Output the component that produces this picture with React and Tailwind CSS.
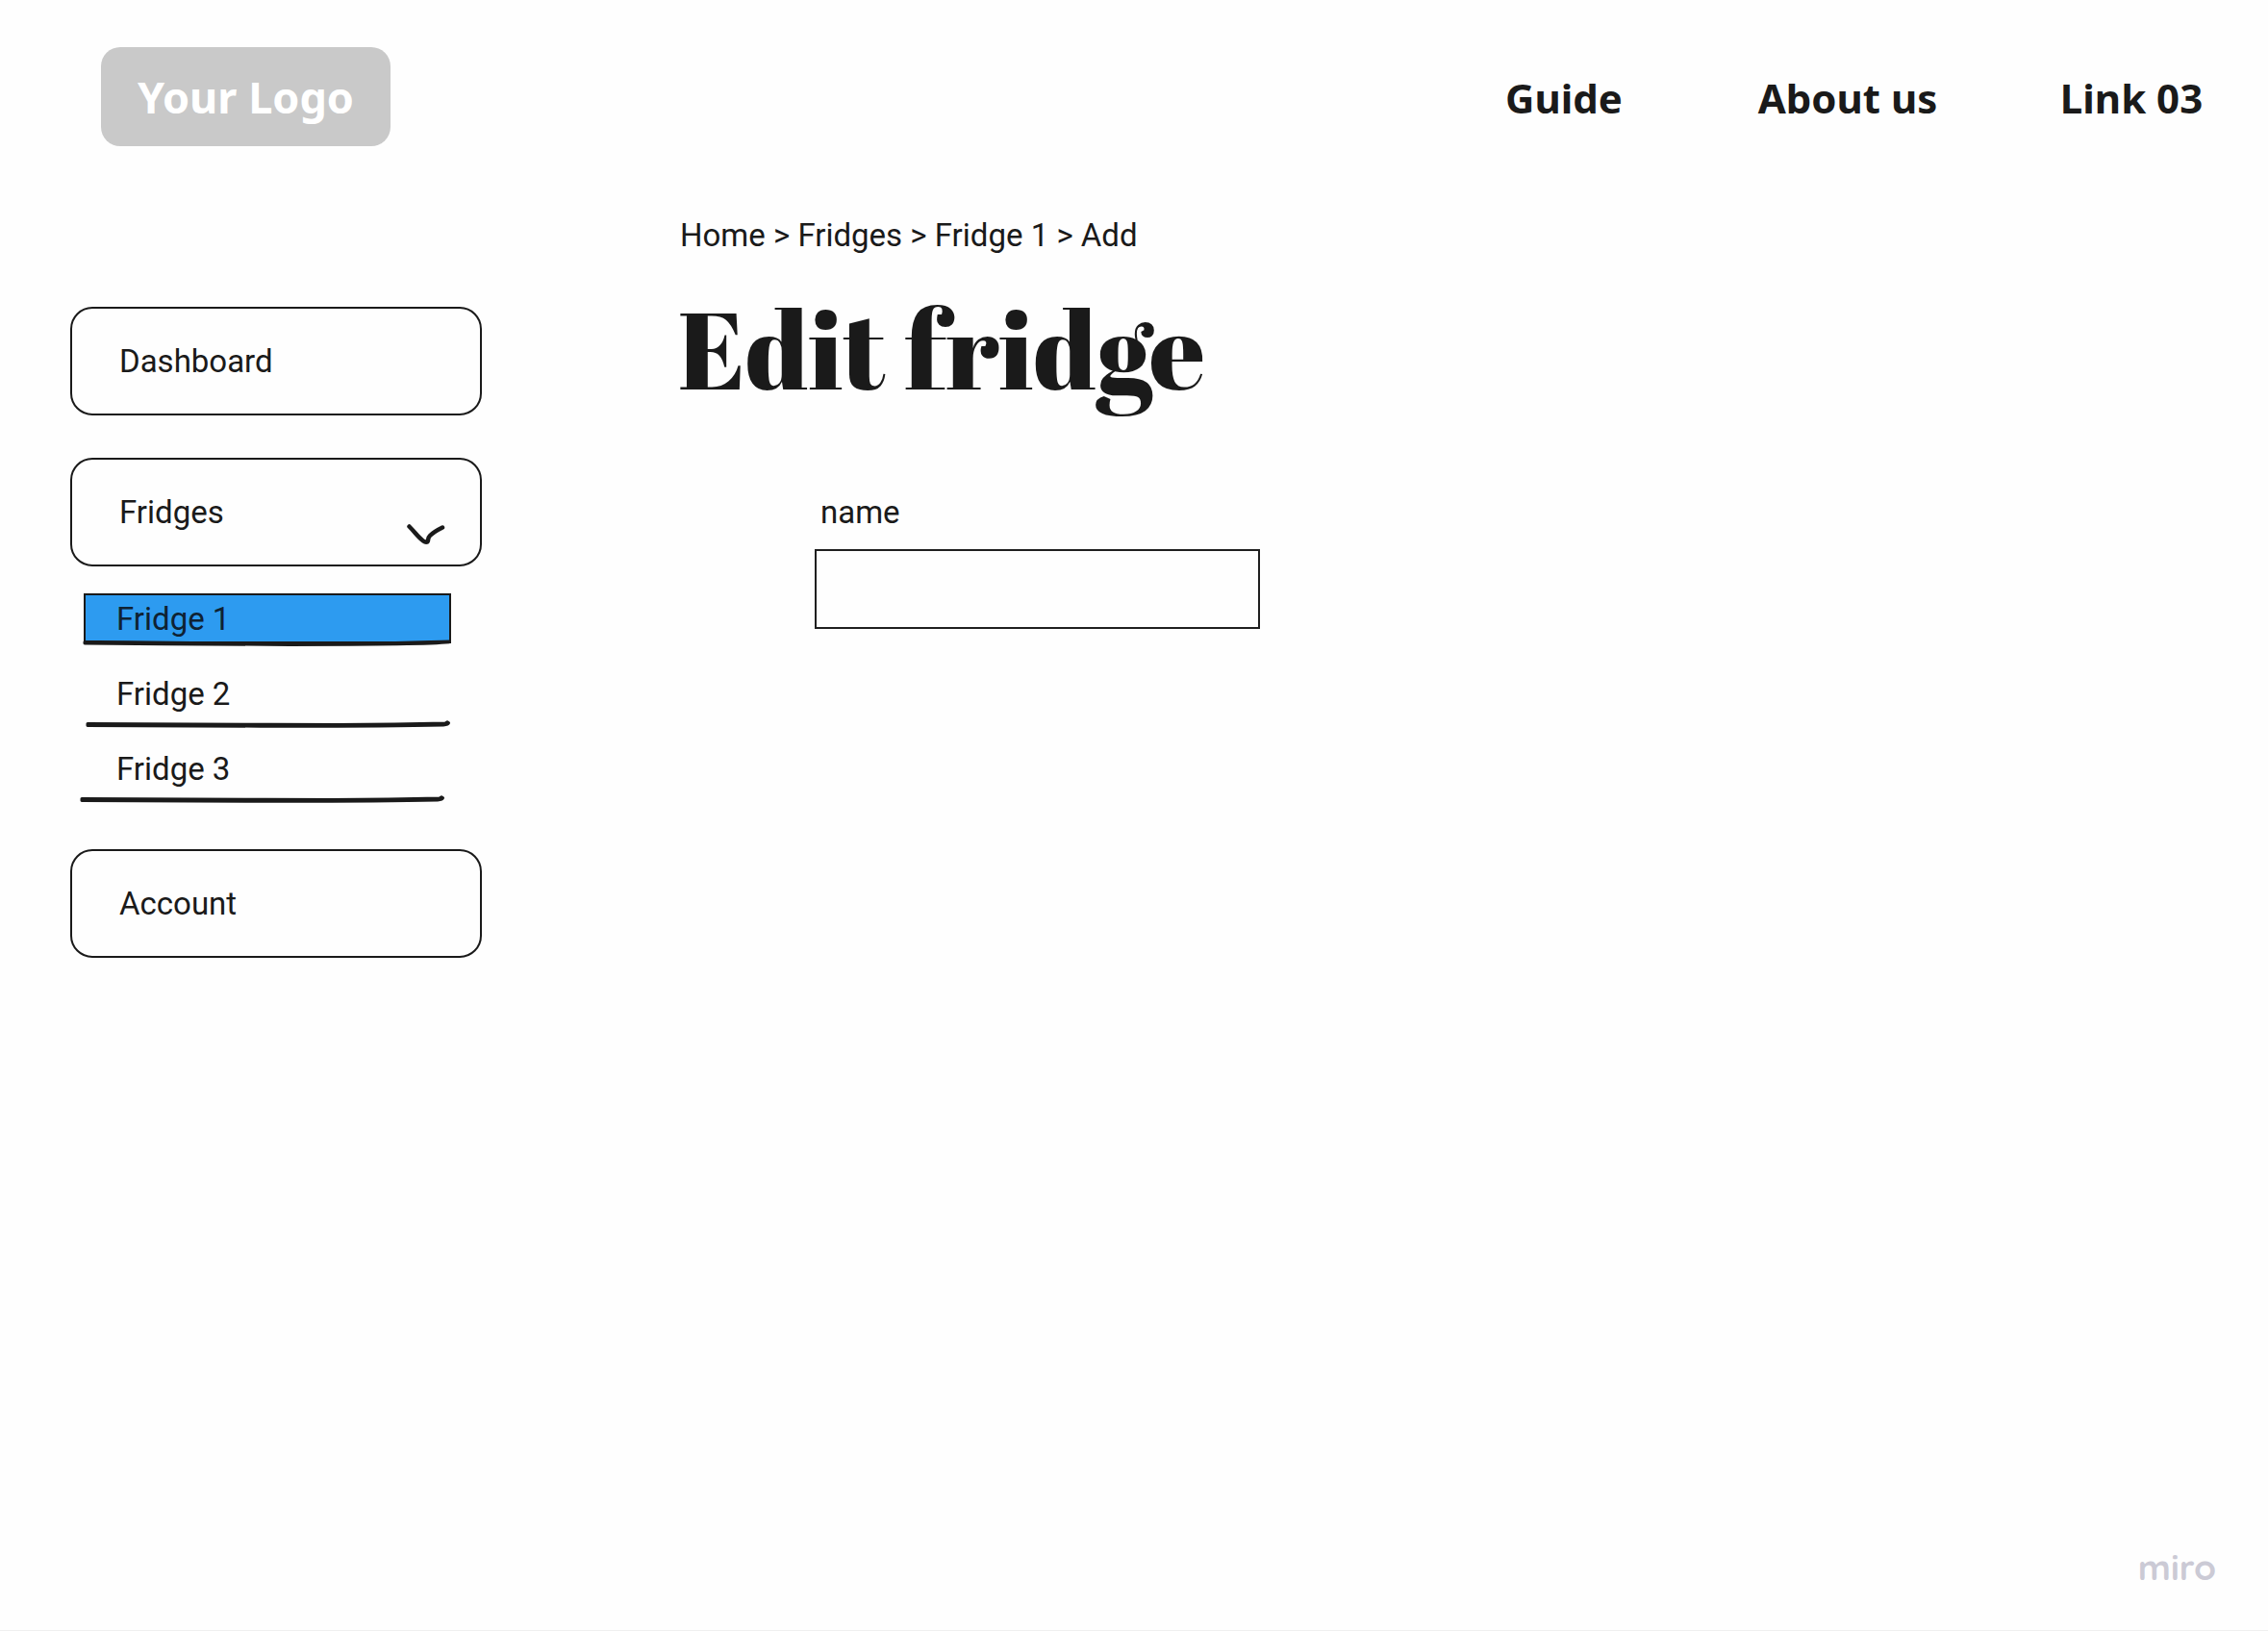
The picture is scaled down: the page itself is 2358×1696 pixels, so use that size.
import React from "react";

const navLinks = ["Guide", "About us", "Link 03"];

const fridges = [
  {
    name: "Fridge 1",
    active: true,
    offset: "-mt-1.5",
    stroke:
      "M7 4.5C60 4 110 6 200 6.5S330 5.500 386 4L386 4.800C370 6.500 300 7.400 220 7.400S80 6.300 7 6.100Z",
  },
  {
    name: "Fridge 2",
    active: false,
    offset: "mt-0.5",
    stroke:
      "M10 3.600C80 3.500 180 4.500 270 4.500C320 4.300 350 3.800 382 3L384 1.800L385.500 2.800C385 4.300 383 4.800 380 5C330 6.100 250 6.300 190 6.200C120 6 60 5.500 10 5.400Z",
  },
  {
    name: "Fridge 3",
    active: false,
    offset: "mt-0.5",
    stroke:
      "M4 3.600C74 3.500 174 4.500 264 4.500C314 4.300 344 3.800 376 3L378 1.800L379.500 2.800C379 4.300 377 4.800 374 5C324 6.100 244 6.300 184 6.200C114 6 54 5.500 4 5.400Z",
  },
];

const boxClass =
  "flex h-[113px] w-full items-center rounded-[23px] border-2 border-[#1a1a1a] pl-[49px] pr-9 text-left";

function Underline({ d, offset }) {
  return (
    <svg
      className={`absolute top-full -left-1.5 h-2.5 w-[392px] ${offset}`}
      viewBox="0 0 392 10"
      aria-hidden="true"
    >
      <path d={d} fill="#1a1a1a" stroke="#1a1a1a" strokeWidth="3" strokeLinejoin="round" />
    </svg>
  );
}

function Header() {
  return (
    <header className="flex items-center justify-between pt-[49px] pr-[22px] pl-[105px] font-['Noto_Sans',sans-serif] font-bold">
      <a
        href="#home"
        className="flex h-[103px] w-[301px] items-center justify-center rounded-[20px] bg-[#c9c9c9] text-[45px] text-white"
      >
        Your Logo
      </a>
      <nav className="mt-0.5 grid grid-cols-3 gap-[55px] text-center text-[42px]">
        {navLinks.map((label) => (
          <a key={label} href="#" className="w-60">
            {label}
          </a>
        ))}
      </nav>
    </header>
  );
}

function Sidebar() {
  return (
    <aside className="w-[428px] shrink-0 pt-[167px]">
      <nav>
        <a href="#dashboard" className={boxClass}>
          Dashboard
        </a>
        <button type="button" aria-expanded="true" className={`${boxClass} mt-11`}>
          <span className="grow">Fridges</span>
          <svg
            className="mb-[18px] h-6 w-10 self-end"
            viewBox="0 0 40 24"
            fill="none"
            stroke="#1a1a1a"
            strokeWidth="4.500"
            strokeLinecap="round"
            strokeLinejoin="round"
            aria-hidden="true"
          >
            <path d="M2.500 2.500C8 8 12 14 17 17.500C19 19 21.500 19.500 22 17C22.300 15 22 14 24 12C28 8 32 6 37 3.500" />
          </svg>
        </button>
        <ul className="mt-7 ml-3.5 flex flex-col gap-[26px]">
          {fridges.map((fridge) => (
            <li key={fridge.name} className="relative h-[52px] w-[382px]">
              <a
                href="#fridge"
                aria-current={fridge.active ? "page" : undefined}
                className={`flex h-full items-center border-2 pt-0.5 pl-8 ${
                  fridge.active ? "border-[#1a1a1a] bg-[#2d9bf0] text-[#0f2233]" : "border-transparent"
                }`}
              >
                {fridge.name}
              </a>
              <Underline d={fridge.stroke} offset={fridge.offset} />
            </li>
          ))}
        </ul>
        <a href="#account" className={`${boxClass} mt-[58px]`}>
          Account
        </a>
      </nav>
    </aside>
  );
}

export default function App() {
  return (
    <div className="flex min-h-screen flex-col border-b border-[#f0f0f0] bg-[#fefefe] font-[Roboto,sans-serif] text-[33px] leading-10 text-[#1a1a1a]">
      <Header />
      <div className="flex grow gap-[206px] pl-[73px]">
        <Sidebar />
        <main className="grow pt-[73px]">
          <nav aria-label="Breadcrumb">
            <a href="#home">Home</a> &gt; <a href="#fridges">Fridges</a> &gt;{" "}
            <a href="#fridge">Fridge 1</a> &gt; <span>Add</span>
          </nav>
          <h1 className="mt-[38px] -ml-0.5 font-['Abril_Fatface','Liberation_Serif',serif] text-[112px] leading-[120px] font-normal">
            Edit fridge
          </h1>
          <form className="mt-[90px] ml-[140px]">
            <label htmlFor="name" className="block pl-1.5">
              name
            </label>
            <input
              id="name"
              type="text"
              className="mt-[18px] block h-[83px] w-[463px] border-2 border-[#1f1f1f] px-4"
            />
          </form>
        </main>
      </div>
      <footer className="flex justify-end pr-[54px] pb-[46px]">
        <span className="font-[Quicksand,Poppins,Lato,sans-serif] text-[37px] font-bold text-[#cbcad5]">miro</span>
      </footer>
    </div>
  );
}
